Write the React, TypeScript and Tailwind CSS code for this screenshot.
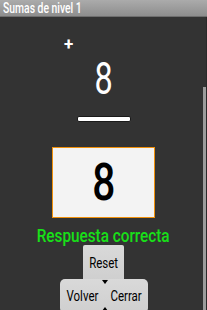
export default function App() {
  return (
    <div className="relative h-[310px] w-[207px] overflow-hidden bg-[#333333] font-['Roboto','Liberation_Sans',sans-serif]">
      <div className="h-[17px] border-b border-[#6e6e6e] bg-gradient-to-b from-[#ababab] to-[#8e8e8e] pl-[3px] text-[14px] font-medium leading-[16px] text-white">
        <span className="inline-block origin-left scale-x-[0.74] whitespace-nowrap">Sumas de nivel 1</span>
      </div>

      <div className="flex flex-col items-center">
        <div className="mt-[20px] w-full pl-[64px] text-[17px] font-bold leading-[14px] text-white">+</div>
        <div className="mt-[8px] text-[45px] leading-[40px] text-white">
          <span className="inline-block scale-x-[0.72]">8</span>
        </div>
        <div className="mt-[17px] h-[6px] w-[54px] rounded-[2px] border border-[#1a1a1a] bg-white" />
        <div className="mt-[25px] flex h-[71px] w-[103px] items-center justify-center border-[1.5px] border-[#f0900a] bg-[#f3f3f3] text-[52px] font-medium leading-none text-black">
          <span className="inline-block scale-x-[0.78]">8</span>
        </div>
        <div className="mt-[9px] whitespace-nowrap text-[18px] font-medium leading-[18px] text-[#18e018]">
          <span className="inline-block scale-x-[0.85]">Respuesta correcta</span>
        </div>
        <div className="flex h-[35px] w-[41px] items-center justify-center rounded-t-[2px] bg-gradient-to-b from-[#d9d9d9] to-[#cfcfcf] text-[14px] leading-none text-black">
          <span className="inline-block scale-x-[0.82]">Reset</span>
        </div>
        <div className="relative -mt-[1px] flex">
          <div className="flex h-[34px] w-[45px] items-center justify-center rounded-[5px] bg-gradient-to-b from-[#d9d9d9] to-[#cfcfcf] text-[14px] leading-none text-black">
            <span className="inline-block scale-x-[0.82]">Volver</span>
          </div>
          <div className="flex h-[34px] w-[43px] items-center justify-center rounded-[5px] bg-gradient-to-b from-[#d9d9d9] to-[#cfcfcf] text-[14px] leading-none text-black">
            <span className="inline-block scale-x-[0.82]">Cerrar</span>
          </div>
          <div className="absolute left-[42px] top-[1px] h-0 w-0 border-x-[3px] border-t-[4px] border-x-transparent border-t-black" />
          <div className="absolute left-[42px] top-[28px] h-0 w-0 border-x-[3px] border-b-[4px] border-x-transparent border-b-black" />
        </div>
      </div>

      <div className="absolute right-[1px] top-[87px] bottom-0 w-[3px] bg-[#9c9c9c]" />
      <div className="absolute right-0 top-[17px] bottom-0 w-[1px] bg-[#2a2a2a]" />
    </div>
  );
}
